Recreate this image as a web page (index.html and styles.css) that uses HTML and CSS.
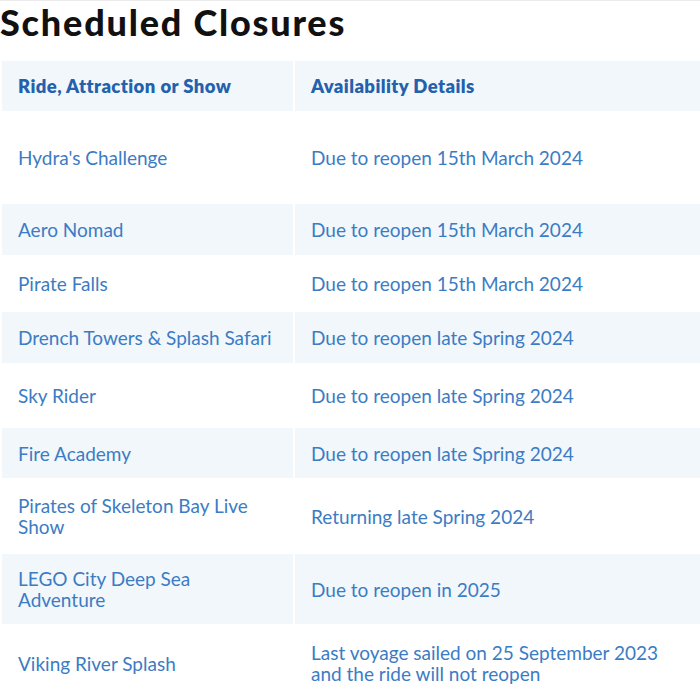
FILE: index.html
```html
<!DOCTYPE html>
<html lang="en">
<head>
<meta charset="utf-8">
<title>Scheduled Closures</title>
<link rel="stylesheet" href="styles.css">
</head>
<body>
<div class="page">
  <h1 class="title">Scheduled Closures</h1>
  <table class="closures">
    <thead>
      <tr>
        <th class="col-ride">Ride, Attraction or Show</th>
        <th class="col-detail">Availability Details</th>
      </tr>
    </thead>
    <tbody>
      <tr class="r1"><td>Hydra's Challenge</td><td>Due to reopen 15th March 2024</td></tr>
      <tr class="r2 shade"><td>Aero Nomad</td><td>Due to reopen 15th March 2024</td></tr>
      <tr class="r3"><td>Pirate Falls</td><td>Due to reopen 15th March 2024</td></tr>
      <tr class="r4 shade"><td>Drench Towers &amp; Splash Safari</td><td>Due to reopen late Spring 2024</td></tr>
      <tr class="r5"><td>Sky Rider</td><td>Due to reopen late Spring 2024</td></tr>
      <tr class="r6 shade"><td>Fire Academy</td><td>Due to reopen late Spring 2024</td></tr>
      <tr class="r7"><td>Pirates of Skeleton Bay Live Show</td><td>Returning late Spring 2024</td></tr>
      <tr class="r8 shade"><td>LEGO City Deep Sea Adventure</td><td>Due to reopen in 2025</td></tr>
      <tr class="r9"><td>Viking River Splash</td><td>Last voyage sailed on 25 September 2023 and the ride will not reopen</td></tr>
    </tbody>
  </table>
</div>
</body>
</html>
```

FILE: styles.css
```css
html, body {
  margin: 0;
  padding: 0;
  background: #ffffff;
}

body {
  overflow: hidden;
  font-family: Lato, "Liberation Sans", sans-serif;
}

.page {
  border-top: 1px solid #ececec;
  width: 720px;
}

.title {
  margin: 0;
  padding: 3px 0 0;
  font-size: 36px;
  line-height: 36px;
  font-weight: 900;
  color: #111111;
  letter-spacing: 1.8px;
}

.closures {
  margin-top: 19px;
  border-collapse: separate;
  border-spacing: 2px;
  table-layout: fixed;
  width: 705px;
  color: #3b7cc4;
  font-size: 19px;
  line-height: 21px;
}

.col-ride {
  width: 259px;
}

.closures th,
.closures td {
  text-align: left;
  vertical-align: middle;
  padding: 0 16px;
}

.closures td + td,
.closures th + th {
  padding-right: 40px;
}

.closures th {
  background: #f2f7fb;
  color: #2461ad;
  font-weight: 800;
  font-size: 18.5px;
  letter-spacing: 0.4px;
  height: 50px;
}

.shade td {
  background: #f2f7fb;
}

.r1 td { height: 89px; }
.r2 td { height: 51px; }
.r3 td { height: 53px; }
.r4 td { height: 51px; }
.r5 td { height: 61px; }
.r6 td { height: 50px; }
.r7 td { height: 72px; }
.r8 td { height: 70px; }
.r9 td { height: 74px; }
```
